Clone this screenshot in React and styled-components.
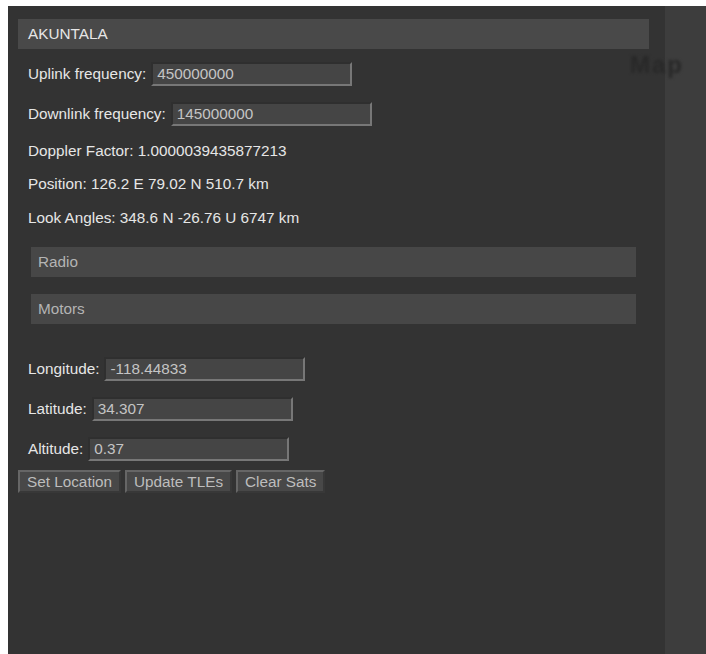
import React from "react";
import styled, { createGlobalStyle } from "styled-components";

const Global = createGlobalStyle`
  html, body { background: #ffffff; }
  body { margin: 6px 0 0 8px; font-family: "Liberation Sans", Arial, sans-serif; overflow: hidden; }
`;

const Layout = styled.div`
  display: flex;
  height: calc(100vh - 6px);
  position: relative;
`;

const Sidebar = styled.div`
  width: 657px;
  flex-shrink: 0;
  background: #333333;
  padding: 13px 16px 0 10px;
  box-sizing: border-box;
  font-size: 15.3px;
  color: #e6e6e6;
`;

const MapArea = styled.div`
  flex: 1;
  background: #3d3d3d;
`;

const Ghost = styled.span`
  position: absolute;
  left: 622px;
  top: 45px;
  font-size: 24px;
  font-weight: bold;
  color: #282828;
  filter: blur(1.4px);
  letter-spacing: 2px;
`;

const Header = styled.div`
  background: #494949;
  height: 30px;
  line-height: 30px;
  padding-left: 10px;
  color: #e6e6e6;
`;

const Content = styled.div`
  padding-left: 10px;
  display: flex;
  flex-direction: column;
`;

const Row = styled.div`
  display: flex;
  align-items: center;
  height: ${(p) => p.$h || 24}px;
  margin-top: ${(p) => p.$mt || 0}px;
  white-space: nowrap;
`;

const Input = styled.input`
  width: 201px;
  height: 24px;
  box-sizing: border-box;
  margin-left: 5px;
  background: #454545;
  color: #c4c4c4;
  font: inherit;
  padding: 0 4px;
  border: 2px solid;
  border-color: #2f2f2f #777777 #777777 #2f2f2f;
  outline: none;
`;

const Section = styled.div`
  margin: ${(p) => p.$mt}px 0 0 3px;
  height: 30px;
  line-height: 30px;
  background: #474747;
  color: #b4b4b4;
  padding-left: 7px;
  width: 605px;
  box-sizing: border-box;
`;

const Buttons = styled.div`
  display: flex;
  gap: 4px;
  margin-top: 9px;
`;

const Button = styled.button`
  height: 23px;
  box-sizing: border-box;
  background: #484848;
  color: #bdbdbd;
  font: inherit;
  font-size: 15.3px;
  padding: 0 7px;
  border: 2px solid;
  border-color: #666666 #383838 #383838 #666666;
  line-height: 18px;
`;

export default function App() {
  return (
    <>
      <Global />
      <Layout>
        <Sidebar>
          <Header>AKUNTALA</Header>
          <Content>
            <Row $mt={13}>
              Uplink frequency:
              <Input defaultValue="450000000" />
            </Row>
            <Row $mt={16}>
              Downlink frequency:
              <Input defaultValue="145000000" />
            </Row>
            <Row $mt={13} $h={24}>Doppler Factor: 1.0000039435877213</Row>
            <Row $mt={9} $h={24}>Position: 126.2 E 79.02 N 510.7 km</Row>
            <Row $mt={10} $h={24}>Look Angles: 348.6 N -26.76 U 6747 km</Row>
            <Section $mt={17}>Radio</Section>
            <Section $mt={17}>Motors</Section>
            <Row $mt={33}>
              Longitude:
              <Input defaultValue="-118.44833" />
            </Row>
            <Row $mt={16}>
              Latitude:
              <Input defaultValue="34.307" />
            </Row>
            <Row $mt={16}>
              Altitude:
              <Input defaultValue="0.37" />
            </Row>
          </Content>
          <Buttons>
            <Button>Set Location</Button>
            <Button>Update TLEs</Button>
            <Button>Clear Sats</Button>
          </Buttons>
        </Sidebar>
        <MapArea />
        <Ghost>Map</Ghost>
      </Layout>
    </>
  );
}
